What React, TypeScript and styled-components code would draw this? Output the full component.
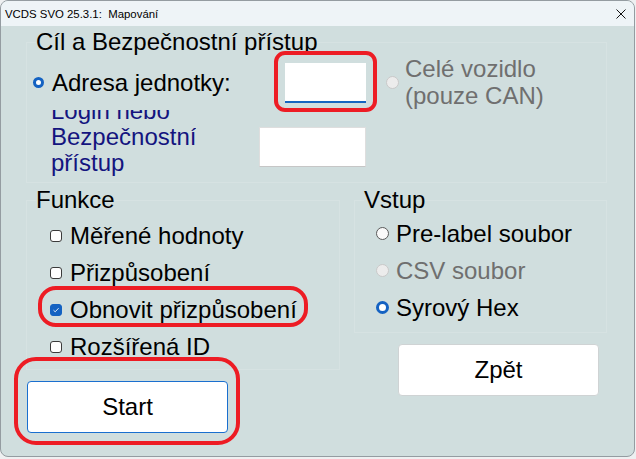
import styled, { createGlobalStyle, css } from "styled-components";

const GlobalStyle = createGlobalStyle`
  html, body {
    margin: 0;
    padding: 0;
    background: #eef0f1;
  }
  body {
    font-family: "Liberation Sans", Arial, sans-serif;
    color: #000;
  }
`;

const Window = styled.div`
  width: 635px;
  height: 457px;
  box-sizing: border-box;
  border: 1px solid #949ca1;
  border-radius: 8px;
  overflow: hidden;
  background: #d0dede;
  display: flex;
  flex-direction: column;
`;

const TitleBar = styled.div`
  height: 25px;
  flex: none;
  display: flex;
  align-items: center;
  padding-left: 4px;
  background: #eef4f7;
  font-size: 11.4px;
  white-space: pre;
`;

const TitleText = styled.span`
  flex: 1;
`;

const CloseIcon = styled.svg`
  width: 10px;
  height: 10px;
  margin-right: 8px;
`;

const Content = styled.div`
  padding-left: 25px;
  display: flex;
  flex-direction: column;
`;

const Group = styled.fieldset<{ $width: number; $padBottom: number }>`
  margin: 0;
  min-width: 0;
  width: ${(p) => p.$width}px;
  box-sizing: border-box;
  padding: 0 0 ${(p) => p.$padBottom}px 6px;
  border: 1px solid rgba(255, 255, 255, 0.14);
`;

const Legend = styled.legend`
  padding: 0;
  margin-left: 3px;
  font-size: 24px;
  line-height: 26px;
`;

const TargetGroup = styled(Group)`
  margin-top: 3px;
`;

const TargetRow = styled.div`
  display: flex;
  align-items: center;
  height: 54px;
`;

const Cluster = styled.div<{ $align: "center" | "flex-start" }>`
  width: 333px;
  display: flex;
  align-items: ${(p) => p.$align};
  justify-content: space-between;
`;

const Option = styled.label<{ $gap: number; $indent?: number; $muted?: boolean }>`
  display: flex;
  align-items: center;
  gap: ${(p) => p.$gap}px;
  padding-left: ${(p) => p.$indent ?? 0}px;
  font-size: 24px;
  line-height: 27px;
  color: ${(p) => (p.$muted ? "#6f6f6f" : "#000")};
  white-space: nowrap;
`;

const StackedText = styled.span`
  display: flex;
  flex-direction: column;
`;

const RadioDot = styled.span<{ $state: "on" | "off" | "disabled"; $size: number }>`
  flex: none;
  box-sizing: border-box;
  width: ${(p) => p.$size}px;
  height: ${(p) => p.$size}px;
  border-radius: 50%;
  ${(p) =>
    p.$state === "on"
      ? css`
          background: #fff;
          border: 3.5px solid #1462c2;
        `
      : p.$state === "disabled"
      ? css`
          background: #ececec;
          border: 1px solid #c9c9c9;
        `
      : css`
          background: #f9f9f9;
          border: 1px solid #5a5a5a;
        `}
`;

const TextBox = styled.input<{ $width: number; $focused?: boolean; $offset?: number }>`
  width: ${(p) => p.$width}px;
  height: 40px;
  box-sizing: border-box;
  margin: ${(p) => p.$offset ?? 0}px 0 0 0;
  padding: 0;
  background: #fff;
  outline: none;
  ${(p) =>
    p.$focused
      ? css`
          border: none;
          border-bottom: 2px solid #1565c0;
        `
      : css`
          border: 1px solid #dedede;
          border-bottom-color: #c6c6c6;
        `}
`;

const WholeCar = styled(Option)`
  margin-left: 20px;
`;

const LoginRow = styled.div`
  margin-top: 1px;
`;

const LoginLabel = styled.div`
  height: 68px;
  overflow: hidden;
  padding-left: 18px;
  font-size: 24px;
  line-height: 26px;
  color: #14147f;
`;

const LoginText = styled.div`
  margin-top: -12px;
`;

const Lower = styled.div`
  display: flex;
  gap: 14px;
  margin-top: 4px;
`;

const Column = styled.div<{ $width: number }>`
  width: ${(p) => p.$width}px;
  display: flex;
  flex-direction: column;
  align-items: flex-start;
`;

const List = styled.div<{ $top: number }>`
  display: flex;
  flex-direction: column;
  margin-top: ${(p) => p.$top}px;
`;

const Row = styled.div`
  height: 37px;
  display: flex;
  align-items: center;
`;

const CheckBox = styled.span<{ $checked?: boolean }>`
  flex: none;
  box-sizing: border-box;
  width: 12px;
  height: 12px;
  border-radius: 3px;
  border: 1px solid ${(p) => (p.$checked ? "#1462c2" : "#3b3b3b")};
  background: ${(p) => (p.$checked ? "#1462c2" : "#fff")};
  display: flex;
  align-items: center;
  justify-content: center;
`;

const Button = styled.button<{ $primary?: boolean; $left: number; $top: number }>`
  width: 201px;
  height: 52px;
  margin: ${(p) => p.$top}px 0 0 ${(p) => p.$left}px;
  box-sizing: border-box;
  background: #fff;
  border: 1px solid ${(p) => (p.$primary ? "#1a6fcf" : "#cfd3d4")};
  border-radius: 4px;
  font-family: "Liberation Sans", Arial, sans-serif;
  font-size: 24px;
  color: #000;
  padding: 0;
`;

type Inset = { top: number; right: number; bottom: number; left: number; radius: number };

const Marked = styled.div<{ $inset: Inset }>`
  position: relative;
  width: fit-content;
  &::after {
    content: "";
    position: absolute;
    top: ${(p) => p.$inset.top}px;
    right: ${(p) => p.$inset.right}px;
    bottom: ${(p) => p.$inset.bottom}px;
    left: ${(p) => p.$inset.left}px;
    border: 4px solid #ed1c24;
    border-radius: ${(p) => p.$inset.radius}px;
    pointer-events: none;
  }
`;

function Check() {
  return (
    <svg width="8" height="8" viewBox="0 0 8 8">
      <path d="M1.5 4.2 L3.2 5.8 L6.6 2.2" fill="none" stroke="#dfe9f7" strokeWidth="1" />
    </svg>
  );
}

const functions = [
  { label: "Měřené hodnoty", checked: false },
  { label: "Přizpůsobení", checked: false },
  { label: "Obnovit přizpůsobení", checked: true },
  { label: "Rozšířená ID", checked: false },
];

const inputs: { label: string; state: "on" | "off" | "disabled" }[] = [
  { label: "Pre-label soubor", state: "off" },
  { label: "CSV soubor", state: "disabled" },
  { label: "Syrový Hex", state: "on" },
];

export default function App() {
  return (
    <>
      <GlobalStyle />
      <Window>
        <TitleBar>
          <TitleText>VCDS SVO 25.3.1:  Mapování</TitleText>
          <CloseIcon viewBox="0 0 10 10">
            <path d="M0.5 0.5 L9.5 9.5 M9.5 0.5 L0.5 9.5" stroke="#111" strokeWidth="1" />
          </CloseIcon>
        </TitleBar>
        <Content>
          <TargetGroup $width={581} $padBottom={4}>
            <Legend>Cíl a Bezpečnostní přístup</Legend>
            <TargetRow>
              <Cluster $align="center">
                <Option $gap={8}>
                  <RadioDot $state="on" $size={11} />
                  Adresa jednotky:
                </Option>
                <Marked $inset={{ top: -10, right: -11, bottom: -9, left: -11, radius: 11 }}>
                  <TextBox $width={81} $focused $offset={2} readOnly />
                </Marked>
              </Cluster>
              <WholeCar $gap={6} $muted>
                <RadioDot $state="disabled" $size={13} />
                <StackedText>
                  <span>Celé vozidlo</span>
                  <span>(pouze CAN)</span>
                </StackedText>
              </WholeCar>
            </TargetRow>
            <LoginRow>
              <Cluster $align="flex-start">
                <LoginLabel>
                  <LoginText>
                    Login nebo
                    <br />
                    Bezpečnostní
                    <br />
                    přístup
                  </LoginText>
                </LoginLabel>
                <TextBox $width={107} $offset={17} readOnly />
              </Cluster>
            </LoginRow>
          </TargetGroup>

          <Lower>
            <Column $width={314}>
              <Group $width={314} $padBottom={4}>
                <Legend>Funkce</Legend>
                <List $top={4}>
                  {functions.map((f) => {
                    const row = (
                      <Row key={f.label}>
                        <Option $gap={8} $indent={17}>
                          <CheckBox $checked={f.checked}>{f.checked && <Check />}</CheckBox>
                          {f.label}
                        </Option>
                      </Row>
                    );
                    return f.checked ? (
                      <Marked key={f.label} $inset={{ top: -5, right: -11, bottom: 1, left: 5, radius: 18 }}>
                        {row}
                      </Marked>
                    ) : (
                      row
                    );
                  })}
                </List>
              </Group>
              <Marked $inset={{ top: -13, right: -12, bottom: -12, left: -12, radius: 22 }}>
                <Button $primary $left={1} $top={11}>
                  Start
                </Button>
              </Marked>
            </Column>
            <Column $width={253}>
              <Group $width={253} $padBottom={6}>
                <Legend>Vstup</Legend>
                <List $top={2}>
                  {inputs.map((i) => (
                    <Row key={i.label}>
                      <Option $gap={7} $indent={15} $muted={i.state === "disabled"}>
                        <RadioDot $state={i.state} $size={13} />
                        {i.label}
                      </Option>
                    </Row>
                  ))}
                </List>
              </Group>
              <Button $left={44} $top={11}>
                Zpět
              </Button>
            </Column>
          </Lower>
        </Content>
      </Window>
    </>
  );
}
